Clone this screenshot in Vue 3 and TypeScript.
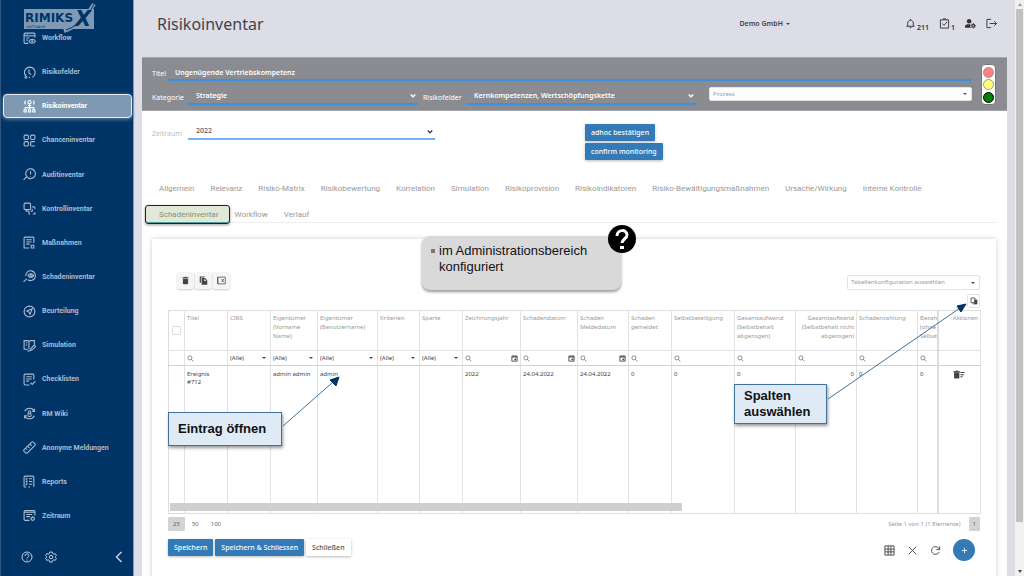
<script setup lang="ts">
import { ref } from 'vue'

interface NavItem { label: string; icon: string[]; active?: boolean }
interface Column {
  title: string
  width: number
  filter: 'search' | 'select' | 'date' | 'none'
  value: string
  right?: boolean
  clipped?: boolean
}

const nav: NavItem[] = [
  { label: 'Workflow', icon: ['M10 21H4a2 2 0 0 1-2-2V4a2 2 0 0 1 2-2h16a2 2 0 0 1 2 2v6', 'M2 7h20', 'M5 4.500h1M8 4.500h1', 'M6 11h6M6 15h3', 'M11 17c3-5 9-5 12 0c-3 5-9 5-12 0z', 'M16 17a1 1 0 1 0 2 0a1 1 0 1 0-2 0'] },
  { label: 'Risikofelder', icon: ['M8 21a10 10 0 1 1 9 0', 'M4 19v3h4', 'M11 6v7l4 3', 'M5 15v2M12 20v2'] },
  { label: 'Risikoinventar', active: true, icon: ['M9 4a3 3 0 1 0 6 0a3 3 0 1 0-6 0', 'M5 1c-2 2-2 5 0 7M19 1c2 2 2 5 0 7', 'M12 7v10M9 10h6', 'M4 18v-4h16v4', 'M2 18h4v4H2zM10 18h4v4h-4zM18 18h4v4h-4z'] },
  { label: 'Chanceninventar', icon: ['M4 2h4a2 2 0 0 1 2 2v4a2 2 0 0 1-2 2H4a2 2 0 0 1-2-2V4a2 2 0 0 1 2-2z', 'M16 2h4a2 2 0 0 1 2 2v4a2 2 0 0 1-2 2h-4a2 2 0 0 1-2-2V4a2 2 0 0 1 2-2z', 'M4 14h4a2 2 0 0 1 2 2v4a2 2 0 0 1-2 2H4a2 2 0 0 1-2-2v-4a2 2 0 0 1 2-2z', 'M22 14h-6a2 2 0 0 0-2 2v4a2 2 0 0 0 2 2h6'] },
  { label: 'Auditinventar', icon: ['M5 11a9 9 0 1 1 4 7', 'M7 16l-6 6', 'M14 6v6M14 15v1', 'M5 11c0 3 1 5 4 7'] },
  { label: 'Kontrollinventar', icon: ['M4 2h8a2 2 0 0 1 2 2v8a2 2 0 0 1-2 2H4a2 2 0 0 1-2-2V4a2 2 0 0 1 2-2z', 'M17 9h3a2 2 0 0 1 2 2v2M22 19v3h-4M13 22h-2v-5', 'M6 14v3h5M14 17h3v-4'] },
  { label: 'Maßnahmen', icon: ['M11 22H2V4a2 2 0 0 1 2-2h14a2 2 0 0 1 2 2v9', 'M6 7h10M6 11h10M6 15h6', 'M15 17h5v5h-5z'] },
  { label: 'Schadeninventar', icon: ['M5 11a9 9 0 1 1 4 7', 'M7 16l-6 6', 'M9 10c2-4 8-4 11 0c-3 5-8 5-11 0z', 'M13 10a2 2 0 1 0 4 0a2 2 0 1 0-4 0'] },
  { label: 'Beurteilung', icon: ['M2 12a10 10 0 1 1 20 0a10 10 0 1 1-20 0', 'M17 7l-4 10l-2-4l-4-2z', 'M12 2v1M12 21v1M2 12h1M21 12h1'] },
  { label: 'Simulation', icon: ['M9 19H2V3h7l2 2v14M11 5l2-2h8v7', 'M5 7h3M5 11h3', 'M14 21l1-4l6-6l2 3l-6 6z', 'M8 22h5'] },
  { label: 'Checklisten', icon: ['M12 22H4a2 2 0 0 1-2-2V4a2 2 0 0 1 2-2h14a2 2 0 0 1 2 2v8', 'M6 7h10M6 11h10M6 15h5', 'M14 18l3 3l6-6'] },
  { label: 'RM Wiki', icon: ['M3 8a10 10 0 0 1 18 0M21 3v5h-4', 'M21 16a10 10 0 0 1-18 0M3 21v-5h4', 'M12 7a2.500 2.500 0 1 0 0 5a2.500 2.500 0 1 0 0-5z', 'M12 12a3 3 0 1 0 0 6a3 3 0 1 0 0-6z'] },
  { label: 'Anonyme Meldungen', icon: ['M2 16L16 2a2 2 0 0 1 3 0l3 3a2 2 0 0 1 0 3L8 22a2 2 0 0 1-3 0l-3-3a2 2 0 0 1 0-3z', 'M9 10l3 3M13 6l3 3M5 14l2 2'] },
  { label: 'Reports', icon: ['M2 22V4a2 2 0 0 1 2-2h14a2 2 0 0 1 2 2v18M2 22h4M10 22h3', 'M5 7l1 1l2-3M5 12l1 1l2-3M5 17l1 1l2-3', 'M11 7h6M11 12h6M11 17h6'] },
  { label: 'Zeitraum', icon: ['M12 21H4a2 2 0 0 1-2-2V5a2 2 0 0 1 2-2h16a2 2 0 0 1 2 2v7', 'M2 6h20', 'M6 10h11M6 14h7', 'M15 18a3 3 0 1 0 6 0a3 3 0 1 0-6 0', 'M18 14v1M18 21v1M14 18h1M21 18h1'] },
]

const tabs = [
  'Allgemein', 'Relevanz', 'Risiko-Matrix', 'Risikobewertung', 'Korrelation', 'Simulation',
  'Risikoprovision', 'Risikoindikatoren', 'Risiko-Bewältigungsmaßnahmen', 'Ursache/Wirkung',
  'Interne Kontrolle', 'Schadeninventar', 'Workflow', 'Verlauf',
]
const activeTab = ref('Schadeninventar')

const columns: Column[] = [
  { title: 'Titel', width: 43, filter: 'search', value: 'Ereignis\n#712' },
  { title: 'CIRS', width: 43, filter: 'select', value: '' },
  { title: 'Eigentümer\n(Vorname\nName)', width: 47, filter: 'select', value: 'admin admin' },
  { title: 'Eigentümer\n(Benutzername)', width: 60, filter: 'select', value: 'admin' },
  { title: 'Kriterien', width: 42, filter: 'select', value: '' },
  { title: 'Sparte', width: 43, filter: 'select', value: '' },
  { title: 'Zeichnungsjahr', width: 58, filter: 'date', value: '2022' },
  { title: 'Schadendatum', width: 57, filter: 'date', value: '24.04.2022' },
  { title: 'Schaden\nMeldedatum', width: 51, filter: 'date', value: '24.04.2022' },
  { title: 'Schaden\ngemeldet', width: 43, filter: 'search', value: '0' },
  { title: 'Selbstbeteiligung', width: 63, filter: 'search', value: '0' },
  { title: 'Gesamtaufwand\n(Selbstbehalt\nabgezogen)', width: 61, filter: 'search', value: '0' },
  { title: 'Gesamtaufwand\n(Selbstbehalt nicht\nabgezogen)', width: 61, filter: 'search', value: '0', right: true },
  { title: 'Schadenzahlung', width: 61, filter: 'search', value: '0' },
  { title: 'Bezah\n(ohne\nSelbst', width: 20, filter: 'search', value: '0', clipped: true },
]

const title = ref('Ungenügende Vertriebskompetenz')
</script>

<template>
  <div class="page">
    <aside class="sidebar">
      <div class="brand">
        <svg class="logo" viewBox="0 0 72 30" role="img" aria-label="RIMIKSX software">
          <rect x="0" y="6" width="70" height="20" fill="#7f9ab5" />
          <path d="M40 28C53 24 62 14 70 1" fill="none" stroke="#7f9ab5" stroke-width="4" />
          <text x="1" y="19" class="logo-name">RIMIKS</text>
          <text x="51" y="23" class="logo-x">X</text>
          <path d="M42 27C56 22 64 13 70 1" fill="none" stroke="#003366" stroke-width="1" />
          <text x="2" y="25" class="logo-sub">software</text>
        </svg>
      </div>
      <nav class="nav">
        <a v-for="item in nav" :key="item.label" href="#" class="nav-item" :class="{ active: item.active }">
          <svg viewBox="0 0 24 24" class="line nav-icon" aria-hidden="true">
            <path v-for="(d, i) in item.icon" :key="i" :d="d" />
          </svg>
          <span>{{ item.label }}</span>
        </a>
      </nav>
      <div class="side-foot">
        <button type="button" aria-label="Hilfe">
          <svg viewBox="0 0 24 24" class="line foot-icon"><circle cx="12" cy="12" r="10" /><path d="M8 10c0-6 8-5 8-1c0 3-4 3-4 6M12 17v2" /></svg>
        </button>
        <button type="button" aria-label="Einstellungen">
          <svg viewBox="0 0 24 24" class="line foot-icon"><circle cx="12" cy="12" r="3.500" /><path d="M9.500 2h5l.7 3 2.300 1.300 3-1 2.300 4-2.300 2.200v1l2.300 2.200-2.300 4-3-1-2.300 1.300-.7 3h-5l-.7-3-2.300-1.300-3 1-2.300-4 2.300-2.200v-1L1.200 9.300l2.300-4 3 1L8.800 5z" /></svg>
        </button>
        <button type="button" class="collapse" aria-label="Menü einklappen">
          <svg viewBox="0 0 24 24" class="line foot-icon thick"><path d="M17 2L7 12l10 10" /></svg>
        </button>
      </div>
    </aside>

    <main class="main">
      <header class="topbar">
        <h1>Risikoinventar</h1>
        <button type="button" class="tenant">Demo GmbH <i class="caret"></i></button>
        <div class="top-icons">
          <button type="button" aria-label="Benachrichtigungen">
            <svg viewBox="0 0 24 24" class="line top-icon"><path d="M6 18v-7c0-8 12-8 12 0v7M3 18h18M12 2v3M10 21h4" /></svg>
            <sub>211</sub>
          </button>
          <button type="button" aria-label="Aufgaben">
            <svg viewBox="0 0 24 24" class="line top-icon"><path d="M3 4h18v18H3zM9 4V2h6v2M7 12l4 4 7-8" /></svg>
            <sub>1</sub>
          </button>
          <button type="button" aria-label="Benutzer">
            <svg viewBox="0 0 24 24" class="top-icon"><circle cx="9" cy="7" r="5" fill="currentColor" /><path d="M0 21v-3c0-4 7-5 12-4c-1 3-1 5 1 7z" fill="currentColor" /><circle cx="18" cy="17" r="3" fill="none" stroke="currentColor" stroke-width="2.500" /><path d="M18 11v2M18 21v2M12 17h2M22 17h2M14 13l1 1M21 20l1 1M14 21l1-1M21 14l1-1" stroke="currentColor" stroke-width="2" /></svg>
          </button>
          <button type="button" aria-label="Abmelden">
            <svg viewBox="0 0 24 24" class="line top-icon"><path d="M11 3H2v18h9M8 12h15M18 7l5 5-5 5" /></svg>
          </button>
        </div>
      </header>

      <section class="panel">
        <div class="fields">
          <div class="row">
            <label for="titel">Titel</label>
            <input id="titel" v-model="title" type="text" class="under">
          </div>
          <div class="row second">
            <label for="kat" class="l-kat">Kategorie</label>
            <div class="pick">
              <select id="kat" class="under"><option>Strategie</option></select>
              <svg viewBox="0 0 8 8" class="chev"><path d="M1 2l3 3 3-3" /></svg>
            </div>
            <label for="feld" class="l-feld">Risikofelder</label>
            <div class="pick">
              <select id="feld" class="under"><option>Kernkompetenzen, Wertschöpfungskette</option></select>
              <svg viewBox="0 0 8 8" class="chev"><path d="M1 2l3 3 3-3" /></svg>
            </div>
            <div class="pick process">
              <select aria-label="Prozess" class="boxed"><option>Prozess</option></select>
              <i class="caret"></i>
            </div>
          </div>
        </div>
        <div class="lights" role="img" aria-label="Ampel: grün">
          <i class="red"></i><i class="yellow"></i><i class="green"></i>
        </div>
      </section>

      <section class="content">
        <div class="period">
          <div class="row period-field">
            <label for="zeit" class="l-kat">Zeitraum</label>
            <div class="pick">
              <select id="zeit" class="under"><option>2022</option></select>
              <svg viewBox="0 0 8 8" class="chev"><path d="M1 2l3 3 3-3" /></svg>
            </div>
          </div>
          <div class="confirm">
            <button type="button" class="btn primary">adhoc bestätigen</button>
            <button type="button" class="btn primary">confirm monitoring</button>
          </div>
        </div>

        <div class="tabs" role="tablist">
          <button
            v-for="t in tabs" :key="t" type="button" role="tab" class="tab"
            :class="{ on: t === activeTab }" :aria-selected="t === activeTab" @click="activeTab = t"
          >{{ t }}</button>
        </div>

        <div class="card">
          <div class="toolbar">
            <div class="tools">
              <button type="button" aria-label="Löschen"><svg viewBox="0 0 24 24" class="fill"><path d="M5 7h14v13a2 2 0 0 1-2 2H7a2 2 0 0 1-2-2zM4 3h5l1-1h4l1 1h5v3H4z" /></svg></button>
              <button type="button" aria-label="Kopieren"><svg viewBox="0 0 24 24" class="fill"><path d="M2 1h13v3H5v14H2z" /><path d="M7 5h9l6 6v12H7zM14 7v6h6z" fill-rule="evenodd" /></svg></button>
              <button type="button" aria-label="Export"><svg viewBox="0 0 24 24" class="line"><path d="M2 3h20v18H2zM2 3v18M12 8l6 8M18 8l-6 8" /></svg></button>
            </div>
            <div class="config">
              <div class="pick conf-pick">
                <select aria-label="Tabellenkonfiguration" class="boxed"><option>Tabellenkonfiguration auswählen</option></select>
                <i class="caret"></i>
              </div>
              <button type="button" class="chooser" aria-label="Spalten auswählen">
                <svg viewBox="0 0 24 24"><path d="M3 3h12v14H3z" fill="none" stroke="currentColor" stroke-width="2.500" /><path d="M13 8h9v14h-9z" fill="currentColor" /><path d="M9 17v4h5" fill="none" stroke="currentColor" stroke-width="2" /></svg>
              </button>
            </div>
          </div>

          <div class="grid">
            <table>
              <colgroup>
                <col class="c-check">
                <col v-for="c in columns" :key="c.title" :style="{ width: c.width + 'px' }">
                <col class="c-act">
              </colgroup>
              <thead>
                <tr class="head">
                  <th class="check"><input type="checkbox" aria-label="Alle auswählen"></th>
                  <th v-for="c in columns" :key="c.title" :class="{ right: c.right, clipped: c.clipped }">{{ c.title }}</th>
                  <th class="act right">Aktionen</th>
                </tr>
                <tr class="filters">
                  <td></td>
                  <td v-for="c in columns" :key="c.title">
                    <div v-if="c.filter === 'select'" class="pick">
                      <select :aria-label="'Filter ' + c.title"><option>(Alle)</option></select>
                      <i class="caret"></i>
                    </div>
                    <div v-else class="search">
                      <svg viewBox="0 0 24 24" class="line"><circle cx="10" cy="10" r="7" /><path d="M15 15l7 7" /></svg>
                      <input type="text" :aria-label="'Filter ' + c.title">
                      <button v-if="c.filter === 'date'" type="button" aria-label="Kalender">
                        <svg viewBox="0 0 24 24"><path d="M3 4h18v17H3zM3 7h18" fill="none" stroke="currentColor" stroke-width="3" /><path d="M12 12h6v6h-6zM6 1h3v4H6zM15 1h3v4h-3z" fill="currentColor" /></svg>
                      </button>
                    </div>
                  </td>
                  <td class="act"></td>
                </tr>
              </thead>
              <tbody>
                <tr>
                  <td></td>
                  <td v-for="c in columns" :key="c.title" :class="{ right: c.right }">{{ c.value }}</td>
                  <td class="act">
                    <button type="button" class="row-del" aria-label="Eintrag löschen">
                      <svg viewBox="0 0 34 24" class="fill"><path d="M3 7h15v14a2 2 0 0 1-2 2H5a2 2 0 0 1-2-2zM1 3h6l1-2h5l1 2h6v3H1zM21 5h12v3H21zM21 11h10v3H21zM21 17h6v3h-6z" /></svg>
                    </button>
                  </td>
                </tr>
              </tbody>
            </table>
            <div class="hbar"></div>
          </div>

          <div class="pager">
            <button type="button" class="cur">25</button>
            <button type="button">50</button>
            <button type="button">100</button>
            <span class="info">Seite 1 von 1 (1 Elemente)</span>
            <button type="button" class="cur page-no">1</button>
          </div>

          <div class="actions">
            <button type="button" class="btn primary">Speichern</button>
            <button type="button" class="btn primary">Speichern &amp; Schliessen</button>
            <button type="button" class="btn plain">Schließen</button>
            <div class="quick">
              <button type="button" aria-label="Tabelle"><svg viewBox="0 0 24 24" class="line"><path d="M2 2h20v20H2zM2 9h20M2 15h20M9 2v20M15 2v20" /></svg></button>
              <button type="button" aria-label="Verwerfen"><svg viewBox="0 0 24 24" class="line"><path d="M4 4l16 16M20 4L4 20" /></svg></button>
              <button type="button" aria-label="Neu laden"><svg viewBox="0 0 24 24" class="line"><path d="M20 15a8.500 8.500 0 1 1-2-9l3 3M21 3v7h-7" /></svg></button>
              <button type="button" class="fab" aria-label="Hinzufügen"><svg viewBox="0 0 24 24" class="line"><path d="M12 3v18M3 12h18" /></svg></button>
            </div>
          </div>
        </div>
      </section>
    </main>

    <div class="vbar"><i class="up"></i><div class="thumb"></div><i class="down"></i></div>

    <div class="note hint">
      <span>im Administrationsbereich konfiguriert</span>
      <svg class="qmark" viewBox="0 0 28 28" aria-hidden="true"><circle cx="14" cy="14" r="14" /><path d="M9 11c0-7 10-7 10-1c0 4-5 4-5 8" fill="none" stroke="#fff" stroke-width="3" /><rect x="12" y="21" width="4" height="3" fill="#fff" /></svg>
    </div>
    <div class="note box open">Eintrag öffnen</div>
    <div class="note box cols">Spalten auswählen</div>
    <svg class="arrow a1" viewBox="0 0 56 50" aria-hidden="true"><path d="M0 49L50 5" /><path class="tip" d="M56 0l-3 9-6-6z" /></svg>
    <svg class="arrow a2" viewBox="0 0 138 96" aria-hidden="true"><path d="M0 95L132 4" /><path class="tip" d="M138 0l-5 8-4-6z" /></svg>
  </div>
</template>

<style>
body { margin: 0; overflow: hidden; }
</style>

<style scoped>
* { box-sizing: border-box; }
.page {
  position: relative;
  display: flex;
  height: 100vh;
  min-height: 576px;
  overflow: hidden;
  background: #dddde8;
  color: #444;
  font: 7px/9px "Noto Sans", sans-serif;
}
button, input, select { font: inherit; color: inherit; border: 0; background: none; padding: 0; margin: 0; border-radius: 0; outline: 0; }
select { appearance: none; width: 100%; min-width: 0; }
svg { display: block; flex: none; overflow: visible; }
.line { fill: none; stroke: currentColor; stroke-width: 2; }
.fill { fill: currentColor; }
.caret { display: inline-block; border: 2px solid transparent; border-top-color: currentColor; border-bottom: 0; }

/* Sidebar */
.sidebar {
  flex: none;
  width: 134px;
  display: flex;
  flex-direction: column;
  background: #003366;
  border-left: 1px solid #2c5580;
  border-right: 1px solid #8298b3;
  color: #a9bdd2;
}
.brand { height: 26px; padding: 3px 0 0 23px; }
.logo { width: 72px; height: 30px; }
.logo-name { font: bold 12px "DejaVu Sans", sans-serif; fill: #003366; }
.logo-x { font: italic bold 21px "DejaVu Sans", sans-serif; fill: #003366; }
.logo-sub { font: 4px "DejaVu Sans Mono", monospace; fill: #003366; }
.nav { flex: 1; display: flex; flex-direction: column; justify-content: space-between; padding: 0 1px 0 2px; }
.nav-item {
  display: flex;
  align-items: center;
  gap: 6px;
  height: 24px;
  padding-left: 19px;
  border: 1px solid transparent;
  border-radius: 4px;
  color: inherit;
  font-family: Roboto, sans-serif;
  font-weight: 700;
  text-decoration: none;
}
.nav-item span { padding-top: 1px; }
.nav-item.active { background: #7f99b3; border-color: #e8edf2; color: #fff; box-shadow: 0 1px 4px #6d8bab; }
.nav-icon { width: 13px; height: 13px; }
.side-foot { flex: none; display: flex; align-items: center; gap: 12px; height: 48px; padding: 10px 8px 0 20px; color: #c3d0de; }
.foot-icon { width: 12px; height: 12px; }
.thick { stroke-width: 3; }
.collapse { margin-left: auto; }

/* Header */
.main { flex: 1; min-width: 0; padding: 0 8px; display: flex; flex-direction: column; }
.topbar { flex: none; height: 57px; padding: 0 10px 10px 15px; display: flex; align-items: center; color: #333; }
h1 { margin: 0; font-size: 16px; line-height: 20px; font-weight: 400; color: #444; }
.tenant { margin-left: auto; display: flex; align-items: center; gap: 3px; font-weight: 600; color: #444; }
.top-icons { margin-left: 115px; display: flex; align-items: center; gap: 10px; }
.top-icons button { display: flex; align-items: center; gap: 1px; }
.top-icon { width: 11px; height: 11px; }
.top-icons sub { font-size: 7px; line-height: 9px; font-weight: 600; vertical-align: baseline; padding-top: 7px; }

/* Title panel */
.panel { flex: none; display: flex; gap: 9px; padding: 6px 11px 5px 10px; background: #8b8c91; border-top: 1px solid #a5a6ac; border-bottom: 1px solid #a5a6ac; color: #fff; }
.fields { flex: 1; min-width: 0; }
.row { display: flex; align-items: center; height: 17px; }
.second { margin-top: 6px; height: 18px; }
.row label { flex: none; padding-top: 2px; }
.l-kat { width: 36px; }
.l-feld { width: 43px; margin-left: 5px; }
.under { flex: 1; width: 100%; height: 100%; padding: 1px 8px 0; border-bottom: 2px solid #3e8fdc; font-weight: 600; }
.row label + .under { margin-left: 2px; padding-left: 7px; }
.pick { position: relative; flex: 230 1 0; min-width: 0; height: 100%; display: flex; align-items: center; }
.pick select { height: 100%; }
.chev { position: absolute; right: 2px; width: 6px; height: 6px; fill: none; stroke: currentColor; stroke-width: 2; pointer-events: none; }
.pick .caret { position: absolute; right: 5px; pointer-events: none; }
.process { flex-grow: 263; margin-left: 13px; height: 14px; align-self: flex-start; }
.boxed { background: #fff; border: 1px solid #e3e3e3; border-radius: 2px; padding-left: 3px; color: #999; font-size: 6px; }
.process .caret { color: #555; }
.lights { flex: none; align-self: center; width: 15px; height: 41px; display: flex; flex-direction: column; align-items: center; justify-content: space-evenly; background: #fff; border: 1px solid #777; border-radius: 4px; }
.lights i { width: 11px; height: 11px; border-radius: 50%; border: 1px solid #999; }
.red { background: #ff8080; }
.yellow { background: #ffff80; }
.lights .green { background: #008000; border-color: #000; }

/* Content */
.content { flex: 1; padding: 13px 11px 0 10px; background: #fff; }
.period { display: grid; grid-template-columns: 283fr 150fr 411fr; }
.period-field label { color: #bbb; }
.period-field .under { padding-top: 0; padding-bottom: 1px; border-bottom: 2px solid #74b3f0; color: #555; font-weight: 500; }
.period-field { height: 16px; }
.confirm { grid-column: 3; display: flex; flex-direction: column; align-items: flex-start; gap: 2px; }
.btn { height: 17px; padding: 0 6px; border-radius: 1px; font-weight: 500; box-shadow: 0 1px 3px #0004; white-space: nowrap; }
.primary { background: #337ab7; color: #fff; }
.plain { background: #fff; color: #555; }

.tabs { display: flex; flex-wrap: wrap; gap: 10px 16px; margin-top: 20px; padding: 0 7px; border-bottom: 1px solid #eee; }
.tab { position: relative; height: 16px; color: #999; font-family: Roboto, sans-serif; font-size: 8px; white-space: nowrap; }
.tab.on { color: #828c78; }
.tab.on::after {
  content: "";
  position: absolute;
  inset: -1px -12px -2px -14px;
  border: 1px solid #222;
  border-radius: 3px;
  background: #8caa6c44;
  box-shadow: 0 1px 3px #0006, inset 0 -1px 0 #4f9a9a;
}

.card { margin-top: 16px; height: 100%; padding: 33px 16px 0; background: #fff; box-shadow: 0 0 5px #0003; }
.toolbar { display: flex; justify-content: space-between; align-items: flex-start; padding-left: 9px; }
.tools { display: flex; gap: 1px; }
.tools button { width: 17px; height: 17px; display: grid; place-items: center; background: #f5f5f5; border-radius: 2px; box-shadow: 0 1px 2px #0003; }
.tools svg { width: 9px; height: 9px; }
.config { display: flex; flex-direction: column; align-items: flex-end; gap: 4px; padding: 3px 0 2px; }
.conf-pick { flex: none; width: 133px; height: 15px; }
.chooser { width: 13px; height: 14px; display: grid; place-items: center; border: 1px solid #e3e3e3; border-radius: 2px; }
.chooser svg { width: 8px; height: 8px; }

/* Table */
.grid { position: relative; font-size: 6px; }
table { width: 100%; height: 204px; table-layout: fixed; border-collapse: collapse; border: 1px solid #ddd; }
.c-check { width: 16px; }
.c-act { width: 43px; }
th, td { padding: 3px 2px 0; border-right: 1px solid #e2e2e2; text-align: left; vertical-align: top; font-weight: 400; white-space: pre; overflow: hidden; }
.head { height: 40px; color: #999; }
.filters { height: 15px; }
.filters td { padding: 0 2px; border-top: 1px solid #e2e2e2; border-bottom: 1px solid #d2d2d2; vertical-align: middle; }
tbody td { padding-top: 4px; white-space: pre-line; line-height: 8px; }
.right { text-align: right; }
.clipped { padding-right: 0; }
.check { padding: 0; text-align: center; vertical-align: middle; }
.check input { appearance: none; display: block; width: 9px; height: 9px; margin: 0 auto; border: 1px solid #ddd; border-radius: 1px; }
.act { border-left: 2px solid #ddd; }
.grid .pick { height: 12px; }
.grid .pick .caret { right: 2px; }
.search { display: flex; align-items: center; height: 12px; }
.search svg { width: 7px; height: 7px; }
.search input { flex: 1; width: 0; min-width: 0; }
.row-del { display: block; margin: 0 auto; }
.row-del svg { width: 12px; height: 9px; }
.hbar { position: absolute; left: 2px; bottom: 3px; width: 63%; height: 8px; background: #cfcfcf; }

.pager { display: flex; align-items: center; margin-top: 3px; height: 14px; font-size: 6px; color: #666; }
.pager button { height: 14px; padding: 0 5px; }
.pager button + button { margin-left: 2px; }
.pager .cur { background: #d3d3d3; border-radius: 1px; }
.pager .page-no { padding: 0 4px; }
.info { margin: 0 8px 0 auto; color: #999; }

.actions { display: flex; align-items: flex-start; gap: 2px; margin-top: 8px; }
.quick { margin-left: auto; display: flex; align-items: center; gap: 12px; padding-right: 5px; }
.quick svg { width: 11px; height: 11px; }
.quick .fab { width: 22px; height: 22px; display: grid; place-items: center; border-radius: 50%; background: #337ab7; color: #fff; }
.quick .fab svg { width: 7px; height: 7px; stroke-width: 3; }

/* Window scrollbar */
.vbar { flex: none; width: 9px; padding: 0 1px; display: flex; flex-direction: column; align-items: center; background: #f1f1f1; }
.vbar i { margin: 3px 0; border: 2px solid transparent; }
.vbar .up { border-top: 0; border-bottom: 3px solid #999; }
.thumb { width: 100%; flex: 512; background: #c1c1c1; }
.vbar .down { margin-top: 48px; border-bottom: 0; border-top: 3px solid #444; }

/* Annotations lying over the page */
.note { position: absolute; color: #111; font: 13px/16px "Liberation Sans", sans-serif; }
.hint { left: 422px; top: 236px; width: 199px; height: 54px; padding: 7px 20px 0 17px; border-radius: 8px; background: #d9d9d9; box-shadow: 0 2px 3px #0006; }
.hint::before { content: ""; position: absolute; left: 9px; top: 13px; width: 4px; height: 4px; background: #777; }
.qmark { position: absolute; right: -15px; top: -11px; width: 28px; height: 28px; }
.box { display: flex; align-items: center; padding: 0 9px; font-weight: bold; background: #deebf7; border: 1px solid #41719c; box-shadow: 1px 2px 3px #0006; }
.open { left: 168px; top: 412px; width: 114px; height: 34px; }
.cols { left: 734px; top: 384px; width: 93px; height: 40px; }
.arrow { position: absolute; fill: none; stroke: #41719c; stroke-width: 1; }
.arrow .tip { fill: #003366; stroke: #003366; }
.a1 { left: 283px; top: 377px; width: 56px; height: 50px; }
.a2 { left: 828px; top: 304px; width: 138px; height: 96px; }
</style>
